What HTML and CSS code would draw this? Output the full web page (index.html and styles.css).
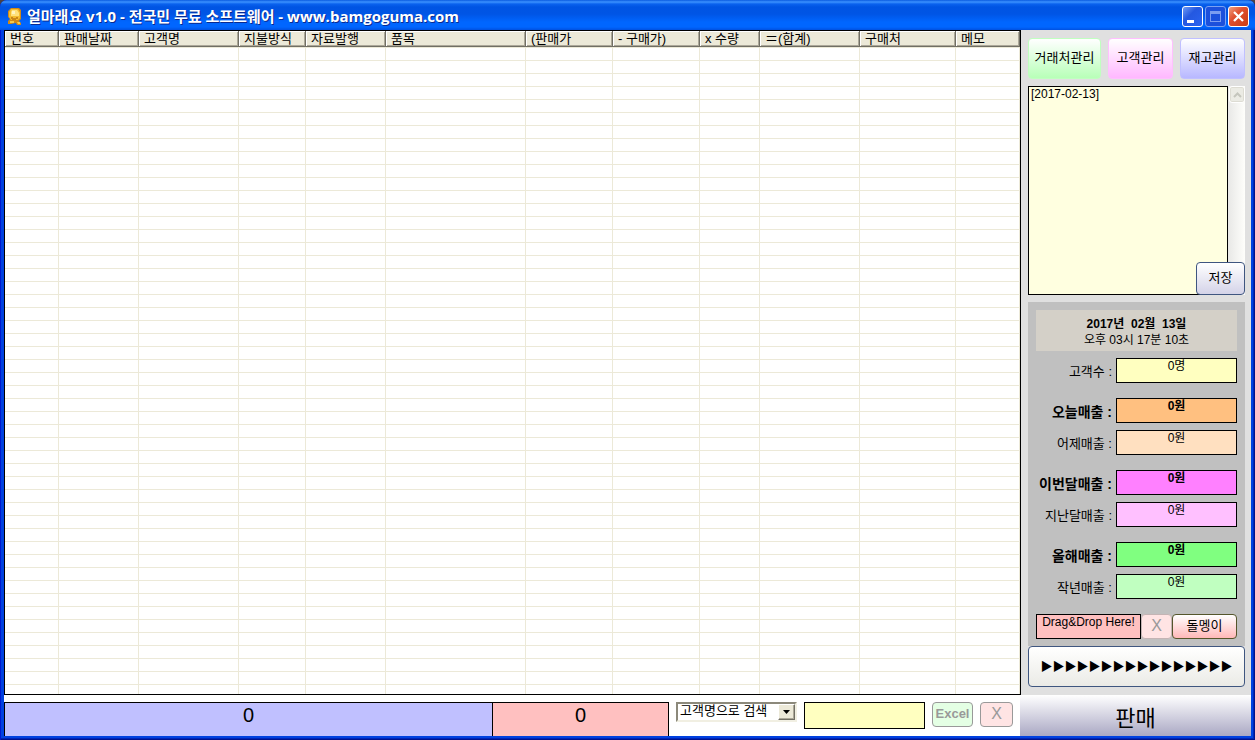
FILE: index.html
```html
<!DOCTYPE html>
<html lang="ko">
<head>
<meta charset="utf-8">
<title>얼마래요 v1.0</title>
<link rel="stylesheet" href="styles.css">
</head>
<body>
<div class="window">
  <header class="titlebar">
    <svg class="app-icon" viewBox="0 0 16 17" aria-hidden="true">
      <path d="M4 0h8l2 2v9l-2 2 2 2v2h-4l-1-2-5 1H1v-3l2-2-2-2V3z" fill="#d18a17"/>
      <path d="M4 1h7l2 3v6l-2 2H4L2 9V4z" fill="#f3bd32"/>
      <path d="M5 2h5l2 3v3H4V4z" fill="#ffe27c"/>
      <path d="M5 3h3v3H5z" fill="#fff5c0"/>
      <path d="M4 9h2v1h3V9h2v2H9v1H5v-1H4z" fill="#c98518"/>
      <path d="M3 13h4v2H3zM10 14h3v2h-2z" fill="#f6ca4b"/>
    </svg>
    <h1 class="title">얼마래요 v1.0 - 전국민 무료 소프트웨어 - www.bamgoguma.com</h1>
    <div class="window-buttons">
      <button class="win-btn" type="button" aria-label="최소화">
        <svg viewBox="0 0 19 19"><path d="M4 13h7v3H4z" fill="#fff"/></svg>
      </button>
      <button class="win-btn win-max" type="button" aria-label="최대화" disabled>
        <svg viewBox="0 0 19 19"><path d="M4 4h11v11H4zM5 7v7h9V7z" fill="#7b9cf0" fill-rule="evenodd"/></svg>
      </button>
      <button class="win-btn win-close" type="button" aria-label="닫기">
        <svg viewBox="0 0 19 19"><path d="M5 5l9 9M14 5l-9 9" stroke="#fff" stroke-width="2.3" fill="none"/></svg>
      </button>
    </div>
  </header>

  <div class="content">
    <main class="main">
      <div class="grid">
        <table class="sales">
          <colgroup>
            <col class="c-no"><col class="c-mid"><col class="c-wide"><col class="c-pay"><col class="c-mid"><col class="c-item">
            <col class="c-price"><col class="c-price"><col class="c-qty"><col class="c-wide"><col class="c-vendor"><col>
          </colgroup>
          <thead>
            <tr><th>번호</th><th>판매날짜</th><th>고객명</th><th>지불방식</th><th>자료발행</th><th>품목</th><th>(판매가</th><th>- 구매가)</th><th>x 수량</th><th>＝(합계)</th><th>구매처</th><th>메모</th></tr>
          </thead>
          <tbody>
            <tr><td></td><td></td><td></td><td></td><td></td><td></td><td></td><td></td><td></td><td></td><td></td><td></td></tr>
          </tbody>
        </table>
      </div>
      <footer class="bottombar">
        <output class="total total-sum">0</output>
        <output class="total total-profit">0</output>
        <div class="search">
          <div class="combo">
            <select class="combo-select" aria-label="검색 기준"><option>고객명으로 검색</option></select>
            <span class="combo-arrow"><svg viewBox="0 0 7 4"><path d="M0 0h7L3.5 4z"/></svg></span>
          </div>
          <input class="search-input" type="text" aria-label="검색어">
          <button class="btn btn-excel" type="button" disabled>Excel</button>
          <button class="btn btn-clear" type="button" disabled>X</button>
        </div>
      </footer>
    </main>

    <aside class="side">
      <div class="side-body">
        <nav class="manage">
          <button class="btn btn-vendor" type="button">거래처관리</button>
          <button class="btn btn-customer" type="button">고객관리</button>
          <button class="btn btn-stock" type="button">재고관리</button>
        </nav>
        <div class="memo">
          <textarea class="memo-text" aria-label="메모">[2017-02-13]</textarea>
          <div class="scrollbar"><span class="scroll-up"><svg viewBox="0 0 9 6"><path d="M1 5l3.500-3.500L8 5" fill="none" stroke="#c5c6bd" stroke-width="2"/></svg></span></div>
          <button class="btn btn-save" type="button">저장</button>
        </div>
        <section class="panel">
          <div class="clock"><strong>2017년&nbsp; 02월&nbsp; 13일</strong><span>오후 03시 17분 10초</span></div>
          <div class="stat-group">
            <div class="stat"><label for="s1">고객수 :</label><output id="s1" class="yellow">0명</output></div>
          </div>
          <div class="stat-group">
            <div class="stat strong"><label for="s2">오늘매출 :</label><output id="s2" class="orange">0원</output></div>
            <div class="stat"><label for="s3">어제매출 :</label><output id="s3" class="peach">0원</output></div>
          </div>
          <div class="stat-group">
            <div class="stat strong"><label for="s4">이번달매출 :</label><output id="s4" class="magenta">0원</output></div>
            <div class="stat"><label for="s5">지난달매출 :</label><output id="s5" class="pink">0원</output></div>
          </div>
          <div class="stat-group">
            <div class="stat strong"><label for="s6">올해매출 :</label><output id="s6" class="green">0원</output></div>
            <div class="stat"><label for="s7">작년매출 :</label><output id="s7" class="mint">0원</output></div>
          </div>
          <div class="drop-row">
            <div class="drop">Drag&amp;Drop Here!</div>
            <button class="btn btn-drop-clear" type="button" disabled>X</button>
            <button class="btn btn-stone" type="button">돌멩이</button>
          </div>
        </section>
        <button class="btn btn-next" type="button">▶▶▶▶▶▶▶▶▶▶▶▶▶▶▶▶</button>
      </div>
      <button class="btn-sell" type="button">판매</button>
    </aside>
  </div>
</div>
</body>
</html>
```

FILE: styles.css
```css
* { box-sizing: border-box; }

body {
  margin: 0;
  background: #4a4244;
  color: #000;
  font: 13px/16px "Liberation Sans", "Noto Sans CJK KR", sans-serif;
}

button, input, select, textarea { font: inherit; color: inherit; margin: 0; }
svg { display: block; }

.window {
  display: flex;
  flex-direction: column;
  height: 100vh;
  min-height: 600px;
  padding: 0 4px 4px;
  border-radius: 7px 7px 0 0;
  background: #0041e0;
  box-shadow: inset 1px 0 #0019cf, inset -1px 0 #00138c, inset 0 -1px #00138c, inset -2px -2px #0025b8;
}

/* Title bar */
.titlebar {
  display: flex;
  flex: none;
  align-items: center;
  gap: 4px;
  height: 30px;
  margin: 0 -4px;
  padding: 2px 6px 0 7px;
  border-radius: 7px 7px 0 0;
  background: linear-gradient(#0a5be0 0, #3c92ff 2px, #0a62ee 4px, #0054e3 7px, #0055e5 14px, #0066ff 22px, #0066ff 27px, #0050e0 30px);
}
.app-icon { width: 16px; height: 17px; }
.title {
  flex: 1;
  margin: 0;
  color: #fff;
  font: bold 15px/18px "Open Sans", "Noto Sans CJK KR", sans-serif;
  text-shadow: 1px 1px #0a2a90;
  white-space: nowrap;
}
.window-buttons { display: flex; gap: 2px; }
.win-btn {
  width: 21px;
  height: 21px;
  padding: 0;
  border: 1px solid #fff;
  border-radius: 3px;
  background: linear-gradient(135deg, #6f9bf5, #2458e0 40%, #2a63f0);
}
.win-max { border-color: #7aa0f2; background: #1c50dc; }
.win-close { background: linear-gradient(135deg, #f0a080, #e05030 40%, #c83c14); }

.content { display: flex; flex: 1; min-height: 0; background: #fff; }
.main { display: flex; flex: 1; flex-direction: column; min-width: 0; }

/* Sales list */
.grid { flex: 1; min-height: 0; margin-right: -1px; border: 1px solid #000; }
.sales {
  width: 100%;
  height: 100%;
  border-collapse: separate;
  border-spacing: 0;
  table-layout: fixed;
}
.c-no { width: 54px; }
.c-mid { width: 80px; }
.c-wide { width: 100px; }
.c-pay { width: 67px; }
.c-item { width: 140px; }
.c-price { width: 87px; }
.c-qty { width: 60px; }
.c-vendor { width: 96px; }
.sales th {
  height: 16px;
  padding: 0 0 0 5px;
  border-right: 1px solid #716f64;
  border-bottom: 1px solid #716f64;
  background: #ece9d8;
  box-shadow: inset 1px 1px #fff, inset -1px -1px #aca899;
  font-weight: normal;
  line-height: 15px;
  text-align: left;
  white-space: nowrap;
}
.sales td {
  padding: 0;
  border-right: 1px solid #ece9d8;
  background: repeating-linear-gradient(#ece9d8 0, #ece9d8 1px, #fff 1px, #fff 13px);
}

/* Bottom bar */
.bottombar { display: flex; flex: none; height: 41px; padding-top: 7px; }
.total {
  border: solid #000;
  border-width: 1px 0 0 1px;
  font-size: 20px;
  line-height: 25px;
  text-align: center;
}
.total-sum { flex: 1; background: #c0c0ff; }
.total-profit { flex: none; width: 177px; border-right-width: 1px; background: #ffc0c0; }
.search { display: flex; flex: none; align-items: flex-start; gap: 7px; padding: 0 7px; }
.combo { position: relative; width: 121px; height: 20px; }
.combo-select {
  width: 100%;
  height: 100%;
  padding: 0 20px 2px 2px;
  border: 2px solid;
  border-color: #8c897b #f1efe2 #f1efe2 #8c897b;
  border-radius: 0;
  appearance: none;
  background: #fff;
  line-height: 14px;
}
.combo-arrow {
  position: absolute;
  top: 2px;
  right: 2px;
  display: grid;
  place-items: center;
  width: 17px;
  height: 16px;
  border: 1px solid;
  border-color: #fff #716f64 #716f64 #fff;
  background: #ece9d8;
  box-shadow: inset -1px -1px #aca899;
  pointer-events: none;
}
.combo-arrow svg { width: 7px; height: 4px; }
.search-input { width: 121px; height: 27px; border: 1px solid #000; border-radius: 0; background: #ffffc0; }

/* Buttons */
.btn {
  padding: 0 0 2px;
  border: 1px solid #3f5680;
  border-radius: 4px;
  background: linear-gradient(#fff, #d4d3e8);
  white-space: nowrap;
}
.btn-excel { width: 41px; height: 25px; border-color: #999; background: #e4ffe4; color: #999; font-weight: bold; }
.btn-clear { width: 33px; height: 25px; border-color: #999; background: #ffe4e4; color: #999; font-size: 16px; }

/* Side column */
.side { display: flex; flex: none; flex-direction: column; width: 231px; }
.side-body {
  display: flex;
  flex: 1;
  flex-direction: column;
  gap: 7px;
  margin-left: 1px;
  padding: 8px 6px 8px 7px;
  background: #e0e0e0;
}
.manage { display: flex; gap: 7px; height: 41px; }
.manage .btn { flex: 1 1 65px; }
.manage .btn-vendor { flex: 1 1 73px; }
.btn-vendor { border-color: #c0ffc0; background: linear-gradient(#fff, #b8ffb8); }
.btn-customer { border-color: #ffc0ff; background: linear-gradient(#fff, #ffb8ff); }
.btn-stock { border-color: #c0c0ff; background: linear-gradient(#fff, #b8b8ff); }

.memo { position: relative; display: flex; flex: 1; min-height: 100px; }
.memo-text {
  flex: 1;
  min-width: 0;
  padding: 0 2px;
  border: 1px solid #000;
  border-radius: 0;
  resize: none;
  background: #ffffe0;
  font-size: 12px;
  line-height: 14px;
}
.scrollbar { width: 17px; padding-left: 1px; background: linear-gradient(90deg, #e8e8e6, #fefefb); }
.scroll-up {
  display: grid;
  place-items: center;
  height: 17px;
  border: 1px solid #fff;
  border-radius: 3px;
  background: #ebebe4;
  box-shadow: inset 0 0 0 1px #dddcd3;
}
.scroll-up svg { width: 9px; height: 6px; }
.btn-save { position: absolute; right: 0; bottom: 0; width: 49px; height: 33px; }

.panel {
  display: flex;
  flex: none;
  flex-direction: column;
  gap: 15px;
  margin-bottom: -7px;
  padding: 8px 8px 7px;
  background: #c0c0c0;
}
.clock {
  display: flex;
  flex-direction: column;
  align-items: center;
  height: 41px;
  margin-bottom: -8px;
  padding-top: 6px;
  background: #d4d0c8;
  font-size: 12px;
}
.stat-group { display: flex; flex-direction: column; gap: 7px; }
.stat { display: flex; align-items: center; justify-content: flex-end; gap: 4px; height: 25px; white-space: nowrap; }
.stat label { padding-top: 2px; }
.strong { font-weight: bold; }
.strong label { font-size: 14px; }
.stat output {
  flex: none;
  width: 121px;
  height: 25px;
  border: 1px solid #000;
  font-size: 12px;
  line-height: 14px;
  text-align: center;
}
.yellow { background: #ffffc0; }
.orange { background: #ffc080; }
.peach { background: #ffe0c0; }
.magenta { background: #ff80ff; }
.pink { background: #ffc0ff; }
.green { background: #80ff80; }
.mint { background: #c0ffc0; }

.drop-row { display: flex; height: 25px; }
.drop {
  flex: 1;
  border: 1px solid #000;
  background: #ffc0c0;
  font-size: 12px;
  line-height: 14px;
  text-align: center;
  white-space: nowrap;
}
.btn-drop-clear { width: 31px; border-color: #c4b4b4; background: #ffe4e4; color: #999; font-size: 16px; }
.btn-stone { width: 65px; border-color: #55552b; background: linear-gradient(#fff, #ffb8b8); }
.btn-next {
  flex: none;
  height: 41px;
  background: linear-gradient(#fff, #ebebe6);
  font: 12px/16px "Noto Sans CJK KR", sans-serif;
}
.btn-sell {
  flex: none;
  height: 41px;
  padding: 6px 0 0;
  border: 0;
  background: linear-gradient(#fff, #aaa8c4);
  font-size: 22px;
  line-height: 30px;
}
```
